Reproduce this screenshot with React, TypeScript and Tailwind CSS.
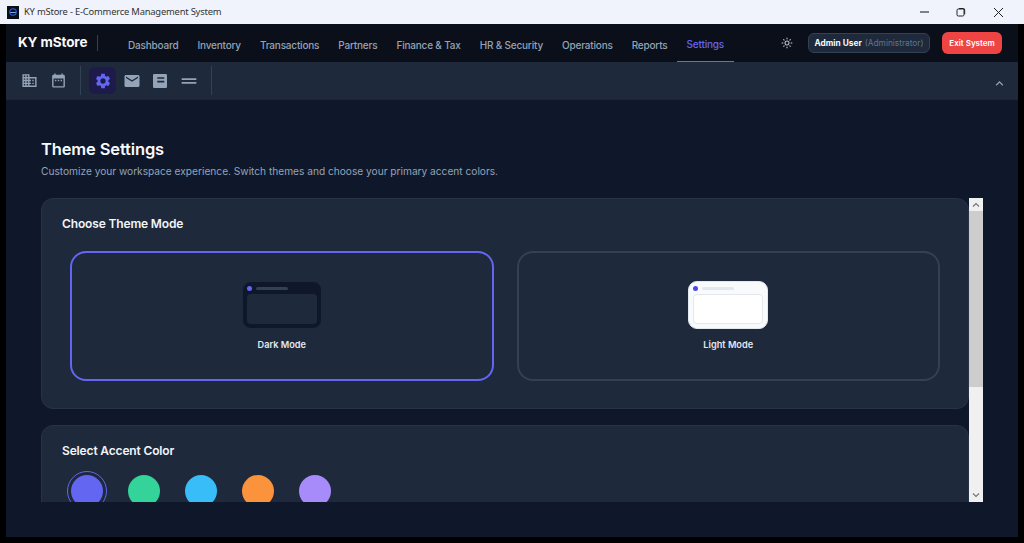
import React from "react";
import { MdDomain, MdDateRange, MdSettings, MdEmail, MdDragHandle, MdOutlineLightMode, MdKeyboardArrowUp } from "react-icons/md";

const navItems = ["Dashboard", "Inventory", "Transactions", "Partners", "Finance & Tax", "HR & Security", "Operations", "Reports"];
const accents = [
  { color: "bg-[#6366f1]", ring: true },
  { color: "bg-[#34d399]", ring: false },
  { color: "bg-[#38bdf8]", ring: false },
  { color: "bg-[#fb923c]", ring: false },
  { color: "bg-[#a78bfa]", ring: false },
];

function NoteIcon() {
  return (
    <svg width="14" height="14" viewBox="0 0 14 14" aria-hidden="true">
      <path fillRule="evenodd" fill="#94a3b8" d="M1.3 0h11.4A1.3 1.3 0 0 1 14 1.3v11.4a1.3 1.3 0 0 1-1.3 1.3H1.3A1.3 1.3 0 0 1 0 12.7V1.3A1.3 1.3 0 0 1 1.3 0Zm3 3.2v1.6h7V3.2Zm0 3.6v1.6h7V6.8Z" />
    </svg>
  );
}

function TitleBar() {
  return (
    <div className="flex h-6 shrink-0 items-center bg-[#f0f3fb] text-[#333]">
      <div className="ml-[7px] flex h-[13px] w-[12px] items-center justify-center bg-[#0b0f19]">
        <svg width="10" height="10" viewBox="0 0 11 11" aria-hidden="true">
          <circle cx="5.5" cy="5.5" r="3.6" fill="none" stroke="#2563eb" strokeWidth="1.2" />
          <path d="M2.5 6h6" stroke="#93c5fd" strokeWidth="1" />
        </svg>
      </div>
      <span className="ml-[5px] whitespace-nowrap text-[9.4px] leading-none tracking-[-0.2px] [font-family:'Noto_Sans',sans-serif]">KY mStore - E-Commerce Management System</span>
      <div className="ml-auto mr-[20px] flex items-center gap-[27px]">
        <svg width="10" height="10" viewBox="0 0 10 10" aria-hidden="true"><path d="M1 5h9" stroke="#111" strokeWidth="1" /></svg>
        <svg width="10" height="10" viewBox="0 0 10 10" fill="none" stroke="#222" strokeWidth="1" aria-hidden="true"><rect x="1" y="2" width="7" height="7" rx="1.3" /><path d="M3 1.5h4.2A1.4 1.4 0 0 1 8.7 3v4.2" /></svg>
        <svg width="11" height="11" viewBox="0 0 11 11" stroke="#222" strokeWidth="1" aria-hidden="true"><path d="M1 1l9 9M10 1l-9 9" /></svg>
      </div>
    </div>
  );
}

function NavBar() {
  return (
    <header className="flex h-[38px] shrink-0 items-center bg-[#0b0f19]">
      <div className="ml-3 w-[69px] whitespace-nowrap text-[13.5px] font-bold leading-none tracking-[-0.1px] text-[#f8fafc]">KY mStore</div>
      <div className="ml-[10px] h-[16px] w-px bg-[#334155]" />
      <nav className="ml-[20.5px] flex h-full items-center">
        {navItems.map((item) => (
          <a key={item} className="flex h-full items-center whitespace-nowrap px-[9.5px] pt-[4px] text-[10px] font-medium tracking-[-0.19px] text-[#94a3b8]">{item}</a>
        ))}
        <a className="flex h-[37px] items-center whitespace-nowrap border-b-[1.5px] border-[#6366f1] px-[9.5px] pt-[4px] text-[10px] font-medium tracking-[-0.19px] text-[#6366f1]">Settings</a>
      </nav>
      <div className="ml-auto flex items-center">
        <MdOutlineLightMode className="text-[12px] text-[#cbd5e1]" />
        <div className="ml-[15px] flex h-[20px] w-[122px] items-center justify-center whitespace-nowrap rounded-md border border-[#334155] bg-[#1e293b] text-[8.3px]">
          <span className="font-bold text-[#f8fafc]">Admin User</span>
          <span className="ml-[3px] text-[#64748b]">(Administrator)</span>
        </div>
        <button className="ml-[12px] mr-[16px] flex h-[22px] w-[60px] items-center justify-center whitespace-nowrap rounded-md bg-[#ef4444] text-[8px] font-semibold text-white">Exit System</button>
      </div>
    </header>
  );
}

function ToolBar() {
  return (
    <div className="flex h-[38px] shrink-0 items-center border-b border-[#1b2536] bg-[#1e293b] pl-[15px] pr-[11px]">
      <div className="flex items-center gap-[12px]">
        <MdDomain className="text-[17px] text-[#94a3b8]" />
        <MdDateRange className="text-[17px] text-[#94a3b8]" />
      </div>
      <div className="ml-[13px] h-[29px] w-px bg-[#334155]" />
      <div className="ml-[8px] flex items-center">
        <div className="flex h-[27px] w-[27px] items-center justify-center rounded-md bg-[#1e1b4b]"><MdSettings className="text-[18px] text-[#6366f1]" /></div>
        <div className="ml-[2px] flex w-[27px] justify-center"><MdEmail className="text-[18px] text-[#94a3b8]" /></div>
        <div className="ml-[1px] flex w-[27px] justify-center"><NoteIcon /></div>
        <div className="ml-[2px] flex w-[27px] justify-center"><MdDragHandle className="text-[22px] text-[#94a3b8]" /></div>
      </div>
      <div className="ml-[9px] h-[29px] w-px bg-[#334155]" />
      <MdKeyboardArrowUp className="ml-auto mt-[6px] text-[15px] text-[#94a3b8]" />
    </div>
  );
}

function ModeCard({ label, selected, light }: { label: string; selected?: boolean; light?: boolean }) {
  return (
    <div className={`flex h-[130px] flex-1 flex-col items-center rounded-2xl border-2 pt-[28px] ${selected ? "border-[#6366f1]" : "border-[#334155]"}`}>
      <div className={`flex h-12 w-20 flex-col rounded-[9px] border px-1 pt-[2px] pb-1 ${light ? "border-[#e2e8f0] bg-[#f8fafc]" : "border-[#1e293b] bg-[#0f172a]"}`}>
        <div className="flex h-[8px] items-center">
          <div className={`h-[5px] w-[5px] rounded-full ${light ? "bg-[#4f46e5]" : "bg-[#6366f1]"}`} />
          <div className={`ml-1 h-[3px] w-8 rounded-full ${light ? "bg-[#e2e8f0]" : "bg-[#334155]"}`} />
        </div>
        <div className={`mt-[2px] flex-1 rounded ${light ? "border border-[#e2e8f0] bg-white" : "bg-[#1e293b]"}`} />
      </div>
      <div className="mt-[9px] text-[9.2px] font-semibold text-[#e2e8f0]">{label}</div>
    </div>
  );
}

function ScrollBar() {
  return (
    <div className="flex w-[14px] shrink-0 flex-col bg-[#f0f0f0]">
      <div className="flex h-[13px] items-center justify-center bg-[#f0f0f0]">
        <svg width="8" height="5" viewBox="0 0 8 5" fill="none" stroke="#777" strokeWidth="1.2" aria-hidden="true"><path d="M1 4.5 4 1.5l3 3" /></svg>
      </div>
      <div className="h-[176px] bg-[#cdcdcd]" />
      <div className="flex-1" />
      <div className="flex h-[13px] items-center justify-center">
        <svg width="8" height="5" viewBox="0 0 8 5" fill="none" stroke="#777" strokeWidth="1.2" aria-hidden="true"><path d="M1 .5 4 3.5l3-3" /></svg>
      </div>
    </div>
  );
}

export default function App() {
  return (
    <div className="flex h-[543px] w-[1024px] flex-col overflow-hidden bg-black [font-family:Inter,sans-serif]">
      <TitleBar />
      <div className="flex min-h-0 flex-1 flex-col pb-[6px] pl-[6px] pr-[6px]">
        <NavBar />
        <ToolBar />
        <main className="flex min-h-0 flex-1 flex-col bg-[#0f172a] pl-[35px] pr-[35px] pt-[37px]">
          <h1 className="text-[16.5px] font-semibold leading-[24px] tracking-[-0.14px] text-[#f8fafc]">Theme Settings</h1>
          <p className="mt-[2px] text-[10.2px] leading-[16px] tracking-[-0.02px] text-[#94a3b8]">Customize your workspace experience. Switch themes and choose your primary accent colors.</p>
          <div className="mt-[19px] flex h-[304px] shrink-0">
            <div className="min-w-0 flex-1 overflow-hidden">
              <section className="h-[211px] rounded-xl border border-[#263349] bg-[#1e293b] px-[28px] pt-[16px]">
                <h2 className="-ml-2 text-[12px] font-semibold leading-[18px] tracking-[-0.15px] text-[#f1f5f9]">Choose Theme Mode</h2>
                <div className="mt-[18px] flex gap-[23px]">
                  <ModeCard label="Dark Mode" selected />
                  <ModeCard label="Light Mode" light />
                </div>
              </section>
              <section className="mt-[16px] h-[200px] rounded-xl border border-[#263349] bg-[#1e293b] px-[20px] pt-[16px]">
                <h2 className="text-[12px] font-semibold leading-[18px] tracking-[-0.15px] text-[#f1f5f9]">Select Accent Color</h2>
                <div className="mt-[15px] flex gap-[25px] pl-[9px]">
                  {accents.map((a) => (
                    <div key={a.color} className={`h-8 w-8 rounded-full ${a.color} ${a.ring ? "outline-[1.5px] outline-offset-[3px] outline-[#6366f1]" : ""}`} />
                  ))}
                </div>
              </section>
            </div>
            <ScrollBar />
          </div>
        </main>
      </div>
    </div>
  );
}
